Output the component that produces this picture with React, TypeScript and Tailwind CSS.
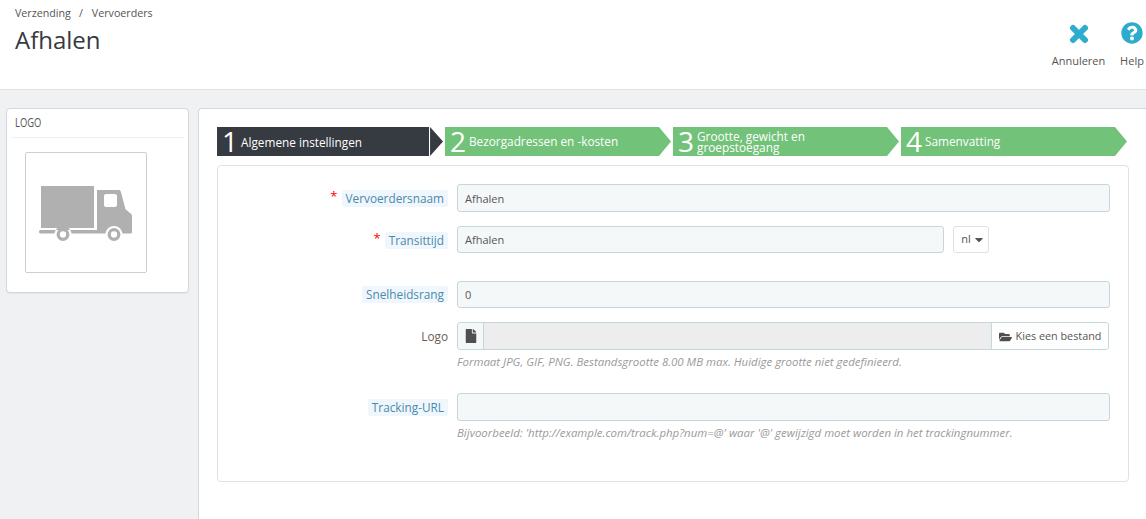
import { FaQuestionCircle, FaFile, FaFolderOpen, FaCaretDown } from "react-icons/fa";

function Step({ n, text, active }: { n: string; text: string; active?: boolean }) {
  return (
    <div className="flex h-[29px] w-[226px] shrink-0 mr-[2px]">
      {active ? (
        <>
          <div className="flex h-full w-[213px] items-center bg-[#363a41] pl-[5px] text-white">
            <span className="w-[19px] text-[28px] font-normal leading-[29px]">{n}</span>
            <span className="text-[11.8px] leading-[12px]">{text}</span>
          </div>
          <div className="ml-px h-full w-[13px] bg-[#363a41] [clip-path:polygon(0_0,100%_50%,0_100%)]" />
        </>
      ) : (
        <div className="flex h-full w-[226px] items-center bg-[#72c279] pl-[5px] text-white [clip-path:polygon(0_0,214px_0,100%_50%,214px_100%,0_100%)]">
          <span className="w-[19px] text-[28px] font-normal leading-[29px]">{n}</span>
          <span className="w-[170px] shrink-0 text-[11.8px] leading-[11px] whitespace-pre-line">{text}</span>
        </div>
      )}
    </div>
  );
}

function Label({ text, required, blue = true }: { text: string; required?: boolean; blue?: boolean }) {
  return (
    <div className="flex w-[232px] shrink-0 items-center justify-end pr-[2px] text-[11.8px]">
      {required && <span className="mr-[4px] mt-[-3px] text-[13px] text-[#ff0000]">*</span>}
      {blue ? (
        <span className="rounded-[2px] bg-[#eff7fc] px-[4px] leading-[17px] text-[#4d88ad]">{text}</span>
      ) : (
        <span className="mt-[2px] text-[#6c5a56]">{text}</span>
      )}
    </div>
  );
}

function Field({ value, className = "" }: { value?: string; className?: string }) {
  return (
    <div className={`flex items-center rounded-[3px] border border-[#c7d6db] bg-[#f5f8f9] pl-[7px] text-[11px] text-[#555] ${className}`}>
      {value}
    </div>
  );
}

function Truck() {
  return (
    <svg width="94" height="56" viewBox="0 0 94 56" className="block">
      <path fill="#b0b0b0" d="M2 1h53v42H2z" />
      <path
        fill="#b0b0b0"
        fillRule="evenodd"
        d="M58 5h21.5c1.2 0 2 .6 2.4 1.8l4.6 17.4 5.4 4.6c.6.5 1.1 1.4 1.1 2.2V47c0 1-.6 1.5-1.5 1.500H83.500c-.8-4.600-4.300-7.500-8.500-7.500s-7.700 2.900-8.500 7.500H32.500c-.8-4.600-4.300-7.500-8.500-7.500s-7.700 2.900-8.500 7.500H1.500C.5 48.500 0 47.800 0 46.800S.5 45 1.500 45H58zM67 9c-1.100 0-2 .9-2 2v9c0 1.100.9 2 2 2h9c1.100 0 2-.9 2-2V11c0-1.100-.9-2-2-2z"
      />
      <circle cx="24" cy="49.500" r="4.800" fill="none" stroke="#b0b0b0" strokeWidth="3.300" />
      <circle cx="75" cy="49.500" r="4.800" fill="none" stroke="#b0b0b0" strokeWidth="3.300" />
    </svg>
  );
}

function CrossIcon() {
  return (
    <svg width="20" height="20" viewBox="0 0 20 20" className="block">
      <path d="M4 4L16 16M16 4L4 16" stroke="#2eacce" strokeWidth="6" strokeLinecap="round" fill="none" />
    </svg>
  );
}

export default function App() {
  return (
    <div className="flex h-[519px] w-[1146px] flex-col overflow-hidden bg-[#eff1f2] font-['Open_Sans',sans-serif]">
      <header className="flex h-[90px] shrink-0 justify-between border-b border-[#dfe1e3] bg-white">
        <div className="pl-[15px] pt-[6px]">
          <div className="text-[10.7px] leading-[15px] text-[#555]">
            <span>Verzending</span>
            <span className="ml-[8px] mr-[9px]">/</span>
            <span>Vervoerders</span>
          </div>
          <h1 className="mt-[2px] text-[24px] font-normal leading-[33px] text-[#363a41]">Afhalen</h1>
        </div>
        <div className="flex pr-[3px] text-[11px] text-[#555]">
          <div className="flex w-[53px] flex-col items-center pt-[24px]">
            <CrossIcon />
            <span className="mt-[9px] leading-[15px]">Annuleren</span>
          </div>
          <div className="ml-[15px] mr-[-1px] flex w-[24px] flex-col items-center pt-[22px]">
            <FaQuestionCircle className="h-[22px] w-[22px] text-[#2eacce]" />
            <span className="mt-[9px] leading-[15px]">Help</span>
          </div>
        </div>
      </header>

      <div className="flex flex-1 pt-[18px]">
        <aside className="ml-[6px] h-[185px] w-[183px] shrink-0 rounded-[4px] border border-[#d3d8db] bg-white px-[4px] shadow-[0_1px_1px_rgba(0,0,0,0.05)]">
          <div className="border-b border-[#eff1f2] pl-[4px] pt-[6px] pb-[6px] text-[12px] leading-[16px] text-[#555]">
            <span className="inline-block origin-left scale-x-[0.78]">LOGO</span>
          </div>
          <div className="ml-[14px] mt-[14px] flex h-[121px] w-[122px] items-center justify-center rounded-[2px] border border-[#cbcfd2] bg-white">
            <Truck />
          </div>
        </aside>

        <main className="ml-[9px] flex-1 rounded-tl-[4px] border-l border-t border-[#d3d8db] bg-white pl-[18px] pt-[18px]">
          <div className="flex">
            <Step n="1" text="Algemene instellingen" active />
            <Step n="2" text="Bezorgadressen en -kosten" />
            <Step n="3" text={"Grootte, gewicht en\ngroepstoegang"} />
            <Step n="4" text="Samenvatting" />
          </div>

          <section className="mt-[9px] h-[317px] w-[912px] rounded-[4px] border border-[#dfe1e3] bg-white pt-[18px]">
            <div className="flex h-[28px]">
              <Label text="Vervoerdersnaam" required />
              <Field value="Afhalen" className="ml-[7px] h-[28px] w-[653px] pt-[3px]" />
            </div>
            <div className="mt-[14px] flex h-[28px]">
              <Label text="Transittijd" required />
              <Field value="Afhalen" className="ml-[7px] h-[27px] w-[487px] pt-[1px]" />
              <div className="ml-[9px] flex h-[27px] w-[36px] items-center justify-center gap-[3px] rounded-[3px] border border-[#dfe1e3] bg-white pl-[3px] text-[11px] text-[#555]">
                nl <FaCaretDown className="h-[13px] w-[10px] text-[#555]" />
              </div>
            </div>
            <div className="mt-[27px] flex h-[27px]">
              <Label text="Snelheidsrang" />
              <Field value="0" className="ml-[7px] h-[27px] w-[653px] pt-[1px]" />
            </div>
            <div className="mt-[14px] flex h-[28px]">
              <Label text="Logo" blue={false} />
              <div className="ml-[7px] flex h-[28px] w-[652px] overflow-hidden rounded-[3px] border border-[#c7d6db] bg-[#ededed]">
                <div className="flex w-[26px] items-center justify-center border-r border-[#c7d6db] bg-[#f5f8f9]">
                  <FaFile className="h-[14px] w-[12px] text-[#4f4f4f]" />
                </div>
                <div className="flex-1" />
                <div className="flex w-[117px] items-center justify-center gap-[4px] border-l border-[#c7d6db] bg-white pt-[1px] text-[10.8px] text-[#555]">
                  <FaFolderOpen className="h-[12px] w-[13px] text-[#4f4f4f]" />
                  <span>Kies een bestand</span>
                </div>
              </div>
            </div>
            <p className="ml-[239px] mt-[4px] text-[11.45px] italic leading-[15px] text-[#9a9a9a]">
              Formaat JPG, GIF, PNG. Bestandsgrootte 8.00 MB max. Huidige grootte niet gedefinieerd.
            </p>
            <div className="mt-[24px] flex h-[28px]">
              <Label text="Tracking-URL" />
              <Field className="ml-[7px] h-[28px] w-[653px]" />
            </div>
            <p className="ml-[239px] mt-[4px] text-[11.45px] italic leading-[15px] text-[#9a9a9a]">
              Bijvoorbeeld: 'http://example.com/track.php?num=@' waar '@' gewijzigd moet worden in het trackingnummer.
            </p>
          </section>
        </main>
      </div>
    </div>
  );
}
